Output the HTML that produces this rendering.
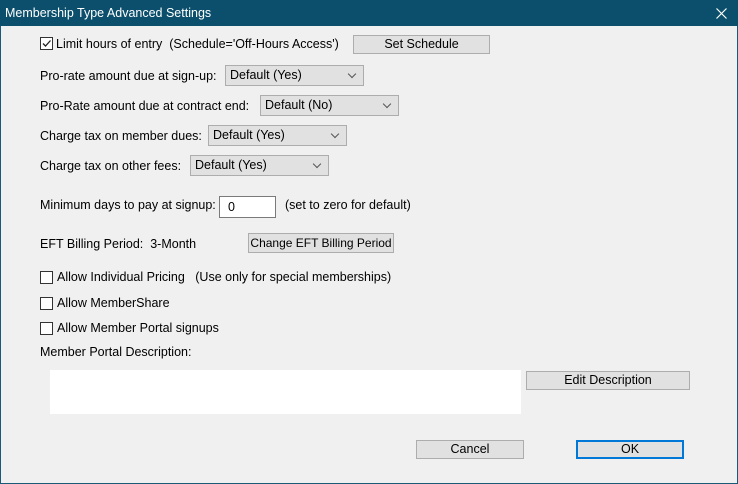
<!DOCTYPE html><html><head><style>
body{margin:0;width:738px;height:484px;overflow:hidden;font-family:"Liberation Sans",sans-serif;font-size:12.5px;color:#000}
#w{position:absolute;left:0;top:0;width:736px;height:482px;border:1px solid #1a5a78;background:#f0f0f0}
#t{position:absolute;left:0;top:0;width:738px;height:26px;background:#0b4f6c;color:#fff}
.a{position:absolute;white-space:pre}
.btn{position:absolute;background:#e1e1e1;border:1px solid #adadad;box-sizing:border-box;text-align:center;line-height:16px;white-space:nowrap;overflow:hidden}
.sel{position:absolute;background:#e1e1e1;border:1px solid #adadad;box-sizing:border-box;height:21px;line-height:19px;padding-left:4px}
.sel:after{content:"";position:absolute;right:8px;top:5px;width:5px;height:5px;border-right:1px solid #555;border-bottom:1px solid #555;transform:rotate(45deg)}
.cb{position:absolute;width:13px;height:13px;border:1px solid #333;box-sizing:border-box;background:#fff}
</style></head><body><div id="w"></div>
<div id="t"><span class="a" style="left:5px;top:6px;font-size:12.5px">Membership Type Advanced Settings</span>
<svg style="position:absolute;left:716px;top:8px" width="11" height="11"><path d="M0.5 0.5L10.5 10.5M10.5 0.5L0.5 10.5" stroke="#fff" stroke-width="1.2"/></svg></div>
<div class="cb" style="left:40px;top:37px"><svg width="11" height="11" style="position:absolute;left:0;top:0"><path d="M2 5.5L4.5 8L9.5 2.5" stroke="#222" stroke-width="1.3" fill="none"/></svg></div>
<span class="a" style="left:56px;top:37px">Limit hours of entry  (Schedule='Off-Hours Access')</span>
<div class="btn" style="left:353px;top:35px;width:137px;height:19px">Set Schedule</div>
<span class="a" style="left:40px;top:69px">Pro-rate amount due at sign-up:</span>
<div class="sel" style="left:225px;top:65px;width:139px">Default  (Yes)</div>
<span class="a" style="left:40px;top:99px">Pro-Rate amount due at contract end:</span>
<div class="sel" style="left:260px;top:95px;width:139px">Default  (No)</div>
<span class="a" style="left:40px;top:129px">Charge tax on member dues:</span>
<div class="sel" style="left:208px;top:125px;width:139px">Default  (Yes)</div>
<span class="a" style="left:40px;top:159px">Charge tax on other fees:</span>
<div class="sel" style="left:190px;top:155px;width:139px">Default  (Yes)</div>
<span class="a" style="left:40px;top:198px">Minimum days to pay at signup:</span>
<div style="position:absolute;left:219px;top:196px;width:57px;height:22px;box-sizing:border-box;border:1px solid #7a7a7a;background:#fff;padding:3px 0 0 8px">0</div>
<span class="a" style="left:285px;top:198px">(set to zero for default)</span>
<span class="a" style="left:40px;top:237px">EFT Billing Period:  3-Month</span>
<div class="btn" style="left:248px;top:233px;width:146px;height:20px;font-size:12px;line-height:18px">Change EFT Billing Period</div>
<div class="cb" style="left:40px;top:271px"></div><span class="a" style="left:57px;top:270px">Allow Individual Pricing   (Use only for special memberships)</span>
<div class="cb" style="left:40px;top:297px"></div><span class="a" style="left:57px;top:296px">Allow MemberShare</span>
<div class="cb" style="left:40px;top:322px"></div><span class="a" style="left:57px;top:321px">Allow Member Portal signups</span>
<span class="a" style="left:40px;top:345px">Member Portal Description:</span>
<div style="position:absolute;left:50px;top:370px;width:471px;height:44px;background:#fff"></div>
<div class="btn" style="left:526px;top:371px;width:164px;height:19px">Edit Description</div>
<div class="btn" style="left:416px;top:440px;width:108px;height:19px">Cancel</div>
<div class="btn" style="left:576px;top:440px;width:108px;height:19px;border:2px solid #0078d7;line-height:15px">OK</div>
</body></html>
